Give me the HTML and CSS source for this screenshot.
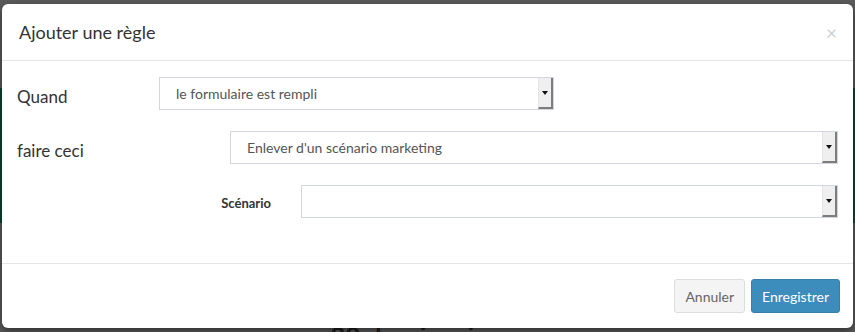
FILE: index.html
```html
<html lang="fr">
  <head>
    <meta charset="UTF-8" />
    <meta name="viewport" content="width=device-width, initial-scale=1.0" />
    <title>Ajouter une règle</title>
    <link rel="stylesheet" href="styles.css">
  </head>
  <body>
    <div class="page">
      <nav class="topnav">
        <div class="topnav-inner">
          <span class="nav-icon"></span>
          <a class="nav-link">Comptes et contacts</a>
          <a class="nav-link">Opportunité</a>
          <a class="nav-link">Gestion</a>
          <a class="nav-link">Stocks</a>
          <a class="nav-link active">Marketing</a>
          <a class="nav-link">Argumentaire</a>
          <span class="nav-round"></span>
          <span class="nav-spacer"></span>
          <span class="nav-round"></span>
        </div>
      </nav>
      <div class="page-gap"></div>
      <div class="hero"></div>
      <h3 class="page-title">30 derniers jours</h3>
    </div>

    <div class="modal">
      <div class="modal-header">
        <h4 class="modal-title">Ajouter une règle</h4>
        <span class="close">&times;</span>
      </div>

      <div class="modal-body">
        <div class="form-row row-when">
          <label class="row-label">Quand</label>
          <div class="select">
            <span class="select-value">le formulaire est rempli</span>
            <span class="select-arrow"></span>
          </div>
        </div>

        <div class="form-row row-do">
          <label class="row-label">faire ceci</label>
          <div class="select">
            <span class="select-value">Enlever d'un scénario marketing</span>
            <span class="select-arrow"></span>
          </div>
        </div>

        <div class="form-row row-scenario">
          <label class="row-label">Scénario</label>
          <div class="select">
            <span class="select-value"></span>
            <span class="select-arrow"></span>
          </div>
        </div>
      </div>

      <div class="modal-footer">
        <button class="btn btn-default">Annuler</button>
        <button class="btn btn-primary">Enregistrer</button>
      </div>
    </div>
  </body>
</html>
```

FILE: styles.css
```css
body {
  font-family: Lato, "Open Sans", sans-serif;
  background-color: #5b5b5b;
  margin: 0;
  height: 332px;
  overflow: hidden;
}
.page {
  display: flex;
  flex-direction: column;
  height: 332px;
  overflow: hidden;
}
.topnav {
  height: 4px;
  overflow: hidden;
  background-color: #131313;
}
.topnav-inner {
  display: flex;
  align-items: center;
  height: 20px;
  margin-top: -15px;
  padding-left: 14px;
  font-size: 15px;
  color: #8a8a8a;
}
.nav-icon {
  width: 12px;
  height: 14px;
  background-color: #777;
  margin-right: 31px;
}
.nav-link {
  padding: 0 16px;
  line-height: 20px;
}
.nav-link.active {
  background-color: #050505;
  color: #bbb;
}
.nav-round {
  width: 14px;
  height: 14px;
  border-radius: 50%;
  background-color: #888;
  margin-left: 18px;
}
.nav-spacer {
  flex: 1;
}
.page-gap {
  height: 88px;
  flex-shrink: 0;
}
.hero {
  height: 135px;
  flex-shrink: 0;
  background-color: #0b4731;
}
.page-title {
  margin: 100px 0 0;
  text-align: center;
  font-size: 26px;
  line-height: 1;
  color: #1e1e1e;
}

/* modal */
.modal {
  position: absolute;
  left: 2px;
  top: 4px;
  width: 851px;
  background-color: white;
  border-radius: 6px;
  box-shadow: 0 3px 9px rgba(0, 0, 0, 0.5);
}
.modal-header {
  display: flex;
  align-items: center;
  padding: 15px 15px 15px 17px;
  border-bottom: 1px solid #e5e5e5;
}
.modal-title {
  flex: 1;
  margin: 0;
  font-size: 18px;
  font-weight: normal;
  line-height: 26px;
  color: #333;
}
.close {
  font-size: 19px;
  color: #d0d0d0;
  margin-right: 1px;
}
.modal-body {
  display: flex;
  flex-direction: column;
  gap: 21px;
  padding: 15px 15px 45px;
}
.form-row {
  display: flex;
  align-items: center;
}
.row-label {
  font-size: 17px;
  color: #333;
  padding-top: 5px;
}
.row-when {
  margin-top: 1px;
}
.row-when .row-label {
  width: 142px;
}
.row-when .select {
  width: 395px;
}
.row-do .row-label {
  width: 213px;
}
.row-do .select,
.row-scenario .select {
  flex: 1;
}
.row-scenario .row-label {
  width: 284px;
  flex-shrink: 0;
  padding: 2px 30px 0 0;
  box-sizing: border-box;
  text-align: right;
  font-size: 13px;
  font-weight: bold;
}
.select {
  display: flex;
  height: 33px;
  box-sizing: border-box;
  border: 1px solid #d2d6de;
  padding-left: 16px;
}
.select-value {
  flex: 1;
  align-self: center;
  font-size: 14px;
  color: #555;
}
.select-arrow {
  display: flex;
  align-items: center;
  justify-content: center;
  width: 12px;
  background-color: #efefef;
  border-left: 1px solid #e4e4e4;
  border-right: 2px solid #7d7d7d;
  border-bottom: 2px solid #7d7d7d;
}
.select-arrow::after {
  content: "";
  border-top: 4px solid #111;
  border-left: 3px solid transparent;
  border-right: 3px solid transparent;
}
.modal-footer {
  display: flex;
  justify-content: flex-end;
  gap: 6px;
  padding: 15px 13px 15px 15px;
  border-top: 1px solid #e5e5e5;
}
.btn {
  font-family: Lato, "Open Sans", sans-serif;
  font-size: 14px;
  height: 34px;
  padding: 0 10px;
  border-radius: 3px;
  cursor: pointer;
}
.btn-default {
  background-color: #f4f4f4;
  border: 1px solid #ddd;
  color: #666;
}
.btn-primary {
  background-color: #3c8dbc;
  border: 1px solid #367fa9;
  color: white;
}
```
